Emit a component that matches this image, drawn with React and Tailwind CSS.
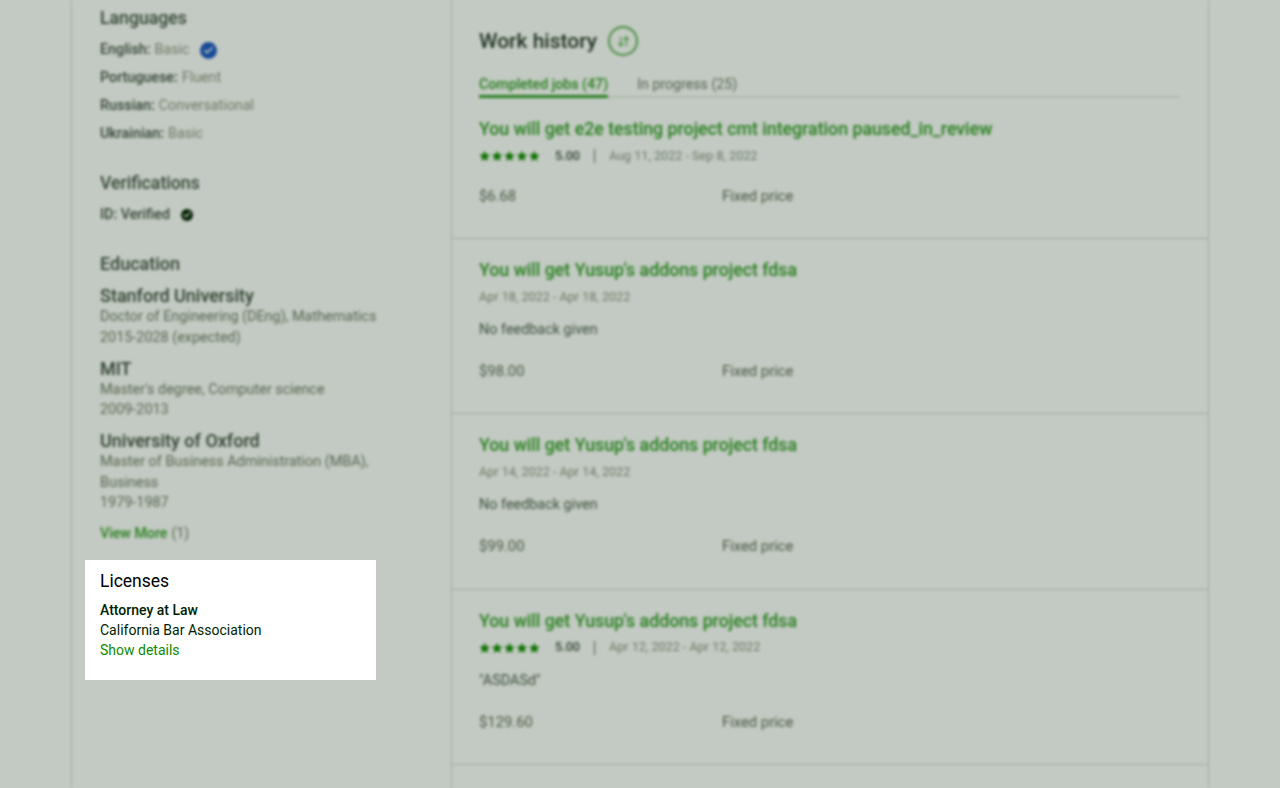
import { ArrowDownUp, Check } from "lucide-react";

const languages = [
  { name: "English", level: "Basic", verified: true },
  { name: "Portuguese", level: "Fluent" },
  { name: "Russian", level: "Conversational" },
  { name: "Ukrainian", level: "Basic" },
];

const education = [
  { school: "Stanford University", lines: ["Doctor of Engineering (DEng), Mathematics", "2015-2028 (expected)"] },
  { school: "MIT", lines: ["Master's degree, Computer science", "2009-2013"] },
  { school: "University of Oxford", lines: ["Master of Business Administration (MBA),", "Business", "1979-1987"] },
];

const jobs = [
  { title: "You will get e2e testing project cmt integration paused_in_review", rating: true, dates: "Aug 11, 2022 - Sep 8, 2022", price: "$6.68" },
  { title: "You will get Yusup's addons project fdsa", dates: "Apr 18, 2022 - Apr 18, 2022", feedback: "No feedback given", price: "$98.00" },
  { title: "You will get Yusup's addons project fdsa", dates: "Apr 14, 2022 - Apr 14, 2022", feedback: "No feedback given", price: "$99.00" },
  { title: "You will get Yusup's addons project fdsa", rating: true, dates: "Apr 12, 2022 - Apr 12, 2022", feedback: "\"ASDASd\"", price: "$129.60" },
];

function Stars() {
  return (
    <svg width="61" height="12" viewBox="0 0 61 12" className="text-[#108a00]" fill="currentColor">
      {[0, 12.4, 24.8, 37.2, 49.6].map((x) => (
        <path key={x} transform={`translate(${x} 0)`} d="M5.7.8l1.6 3.5 3.8.4-2.9 2.5.9 3.8-3.4-2-3.4 2 .9-3.8L.3 4.7l3.8-.4z" />
      ))}
    </svg>
  );
}

function Job({ job, first }) {
  return (
    <div className={`border-b border-[#ccd6cc] pl-[27px] ${first ? "h-[121px] pt-0" : "h-[175.3px] pt-[20px]"}`}>
      <h4 className="text-[17.75px] leading-[22px] font-medium text-[#2f9a22]">{job.title}</h4>
      <div className="flex items-center h-[20px] mt-[6px] text-[12.6px]">
        {job.rating && (
          <>
            <Stars />
            <span className="ml-[15px] font-medium text-[#3f4f3f]">5.00</span>
            <span className="mx-[14px] h-[14px] w-px bg-[#5e6d55]" />
          </>
        )}
        <span className="text-[#8a9683]">{job.dates}</span>
      </div>
      {job.feedback ? (
        <p className="text-[14.4px] leading-[20px] mt-[13px] text-[#4f5f4f]">{job.feedback}</p>
      ) : null}
      <div className={`flex text-[14.8px] leading-[20px] text-[#5e6d55] ${job.feedback ? "mt-[21px]" : "mt-[20px]"}`}>
        <span className="w-[243px]">{job.price}</span>
        <span>Fixed price</span>
      </div>
    </div>
  );
}

function Sidebar() {
  return (
    <aside className="w-[379px] shrink-0 pl-[28px] pt-[7px]">
      <h3 className="text-[17.7px] leading-[22px] font-medium text-[#3f4f3f]">Languages</h3>
      <div className="mt-[7px]">
        {languages.map((l) => (
          <div key={l.name} className="flex items-center h-[28px] text-[14.3px]">
            <span className="font-medium text-[#3f4f3f]">{l.name}:</span>
            <span className="ml-[4px] text-[#8a9683]">{l.level}</span>
            {l.verified && (
              <span className="ml-[10px] w-[17px] h-[17px] rounded-full bg-[#1f57c3] flex items-center justify-center">
                <Check size={11} strokeWidth={3.5} className="text-white" />
              </span>
            )}
          </div>
        ))}
      </div>
      <h3 className="mt-[24px] text-[17.7px] leading-[22px] font-medium text-[#3f4f3f]">Verifications</h3>
      <div className="flex items-center h-[28px] mt-[7px] text-[14.3px] font-medium text-[#3f4f3f]">
        <span>ID: Verified</span>
        <span className="ml-[11px] w-[12px] h-[12px] rounded-full bg-[#001e00] flex items-center justify-center">
          <Check size={8} strokeWidth={4} className="text-white" />
        </span>
      </div>
      <h3 className="mt-[24px] text-[18px] leading-[22px] font-medium text-[#3f4f3f]">Education</h3>
      <div className="mt-[10px]">
        {education.map((e) => (
          <div key={e.school} className="mb-[9.5px]">
            <p className="text-[18px] leading-[22px] font-medium text-[#3a4a3a]">{e.school}</p>
            {e.lines.map((line) => (
              <p key={line} className="text-[14.4px] leading-[20.5px] text-[#6e7c66]">{line}</p>
            ))}
          </div>
        ))}
      </div>
      <p className="mt-[9px] text-[14.2px] leading-[20px]">
        <span className="font-medium text-[#2f9a22]">View More</span>
        <span className="ml-[4px] text-[#6e7c66]">(1)</span>
      </p>
    </aside>
  );
}

export default function App() {
  return (
    <div className="relative w-[1280px] h-[788px] overflow-hidden bg-white font-['Roboto',sans-serif]">
      <div className="mx-[71px] h-[788px] flex border-x border-[#ccd6cc] blur-[1.4px]">
        <Sidebar />
        <main className="flex-1 border-l border-[#ccd6cc]">
          <div className="pl-[27px] pr-[28px] pt-[26px]">
            <div className="flex items-center gap-[11px]">
              <h2 className="text-[21px] leading-[30px] font-medium text-[#2a3a2a]">Work history</h2>
              <span className="w-[30px] h-[30px] rounded-full border-2 border-[#108a00]/70 flex items-center justify-center">
                <ArrowDownUp size={13} strokeWidth={2} className="text-[#108a00]/80" />
              </span>
            </div>
            <div className="flex mt-[15px] h-[27px] border-b-2 border-[#e4ebe4] text-[14.2px] leading-[26px]">
              <span className="font-medium text-[#2f9a22] border-b-[3px] border-[#2f9a22] h-[27px]">Completed jobs (47)</span>
              <span className="ml-[29px] text-[#6e7c66]">In progress (25)</span>
            </div>
          </div>
          <div className="pt-[20px]">
            {jobs.map((job, i) => (
              <Job key={job.dates} job={job} first={i === 0} />
            ))}
          </div>
        </main>
      </div>
      <div className="absolute inset-0 bg-[#001e00]/[0.235]" />
      <div className="absolute left-[85px] top-[560px] w-[291px] h-[120px] bg-white pl-[15px] pt-[10px]">
        <h3 className="text-[17.5px] leading-[22px] text-black">Licenses</h3>
        <p className="mt-[8px] text-[14px] leading-[20px] font-medium text-[#001e00]">Attorney at Law</p>
        <p className="text-[14px] leading-[20px] text-[#001e00]">California Bar Association</p>
        <p className="text-[14px] leading-[20px] text-[#108a00]">Show details</p>
      </div>
    </div>
  );
}
